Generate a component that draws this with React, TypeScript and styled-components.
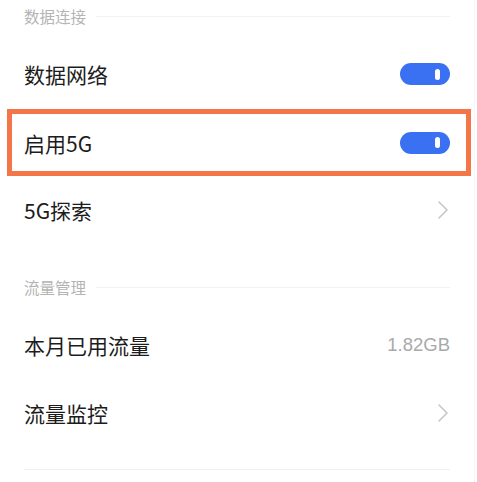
import React from 'react';
import styled, { createGlobalStyle } from 'styled-components';

const GlobalStyle = createGlobalStyle`
    html, body {
        margin: 0;
        padding: 0;
        background: #ffffff;
    }
    body {
        font-family: 'Noto Sans CJK SC', 'Noto Sans', sans-serif;
    }
`;

const Page = styled.div`
    width: 475px;
    min-height: 482px;
    border-right: 1px solid #f4f4f4;
    padding: 0 24px 0 24px;
    box-sizing: border-box;
    display: flex;
    flex-direction: column;
`;

const SectionHeader = styled.div<{ $top?: number }>`
    display: flex;
    align-items: center;
    height: 32px;
    margin-top: ${({ $top }) => $top ?? 0}px;
    margin-bottom: 8px;
    font-size: 15.5px;
    color: #b4b4b4;
`;

const HeaderLine = styled.div`
    flex: 1;
    height: 1px;
    margin-left: 10px;
    background: #f2f2f2;
`;

const Row = styled.div`
    display: flex;
    align-items: center;
    justify-content: space-between;
    height: 68px;
    font-size: 21px;
    color: #1c1c1c;
`;

const Highlight = styled.div`
    margin: 1px -21px 0 -17px;
    padding: 0 16px 0 12px;
    border: 5px solid #f47548;
    box-sizing: border-box;
    height: 67px;
    display: flex;
    align-items: center;
    justify-content: space-between;
    font-size: 21px;
    color: #1c1c1c;
`;

const Toggle = styled.div<{ $on: boolean }>`
    width: 50px;
    height: 22px;
    border-radius: 11px;
    background: ${({ $on }) => ($on ? '#3a70f2' : '#dcdcdc')};
    display: flex;
    align-items: center;
    justify-content: ${({ $on }) => ($on ? 'flex-end' : 'flex-start')};
    padding: 0 10px;
    box-sizing: border-box;
`;

const Knob = styled.div`
    width: 5px;
    height: 11px;
    border-radius: 3px;
    background: #ffffff;
`;

const Value = styled.span`
    font-family: 'Liberation Sans', 'Noto Sans', sans-serif;
    font-size: 18.5px;
    color: #a9a9a9;
`;

const Divider = styled.div`
    height: 1px;
    margin-top: 22px;
    background: #efefef;
`;

const Chevron = () => (
    <svg width="12" height="20" viewBox="0 0 12 20" style={{ marginRight: 1 }}>
        <path d="M2 2 L10 10 L2 18" fill="none" stroke="#c6c6c6" strokeWidth="1.6" strokeLinecap="round" strokeLinejoin="round" />
    </svg>
);

const Switch = ({ on }: { on: boolean }) => (
    <Toggle $on={on}>
        <Knob />
    </Toggle>
);

const App = () => {
    return (
        <>
            <GlobalStyle />
            <Page>
                <SectionHeader>
                    数据连接
                    <HeaderLine />
                </SectionHeader>
                <Row>
                    数据网络
                    <Switch on />
                </Row>
                <Highlight>
                    启用5G
                    <Switch on />
                </Highlight>
                <Row>
                    5G探索
                    <Chevron />
                </Row>
                <SectionHeader $top={27}>
                    流量管理
                    <HeaderLine />
                </SectionHeader>
                <Row>
                    本月已用流量
                    <Value>1.82GB</Value>
                </Row>
                <Row>
                    流量监控
                    <Chevron />
                </Row>
                <Divider />
            </Page>
        </>
    );
};

export default App;
